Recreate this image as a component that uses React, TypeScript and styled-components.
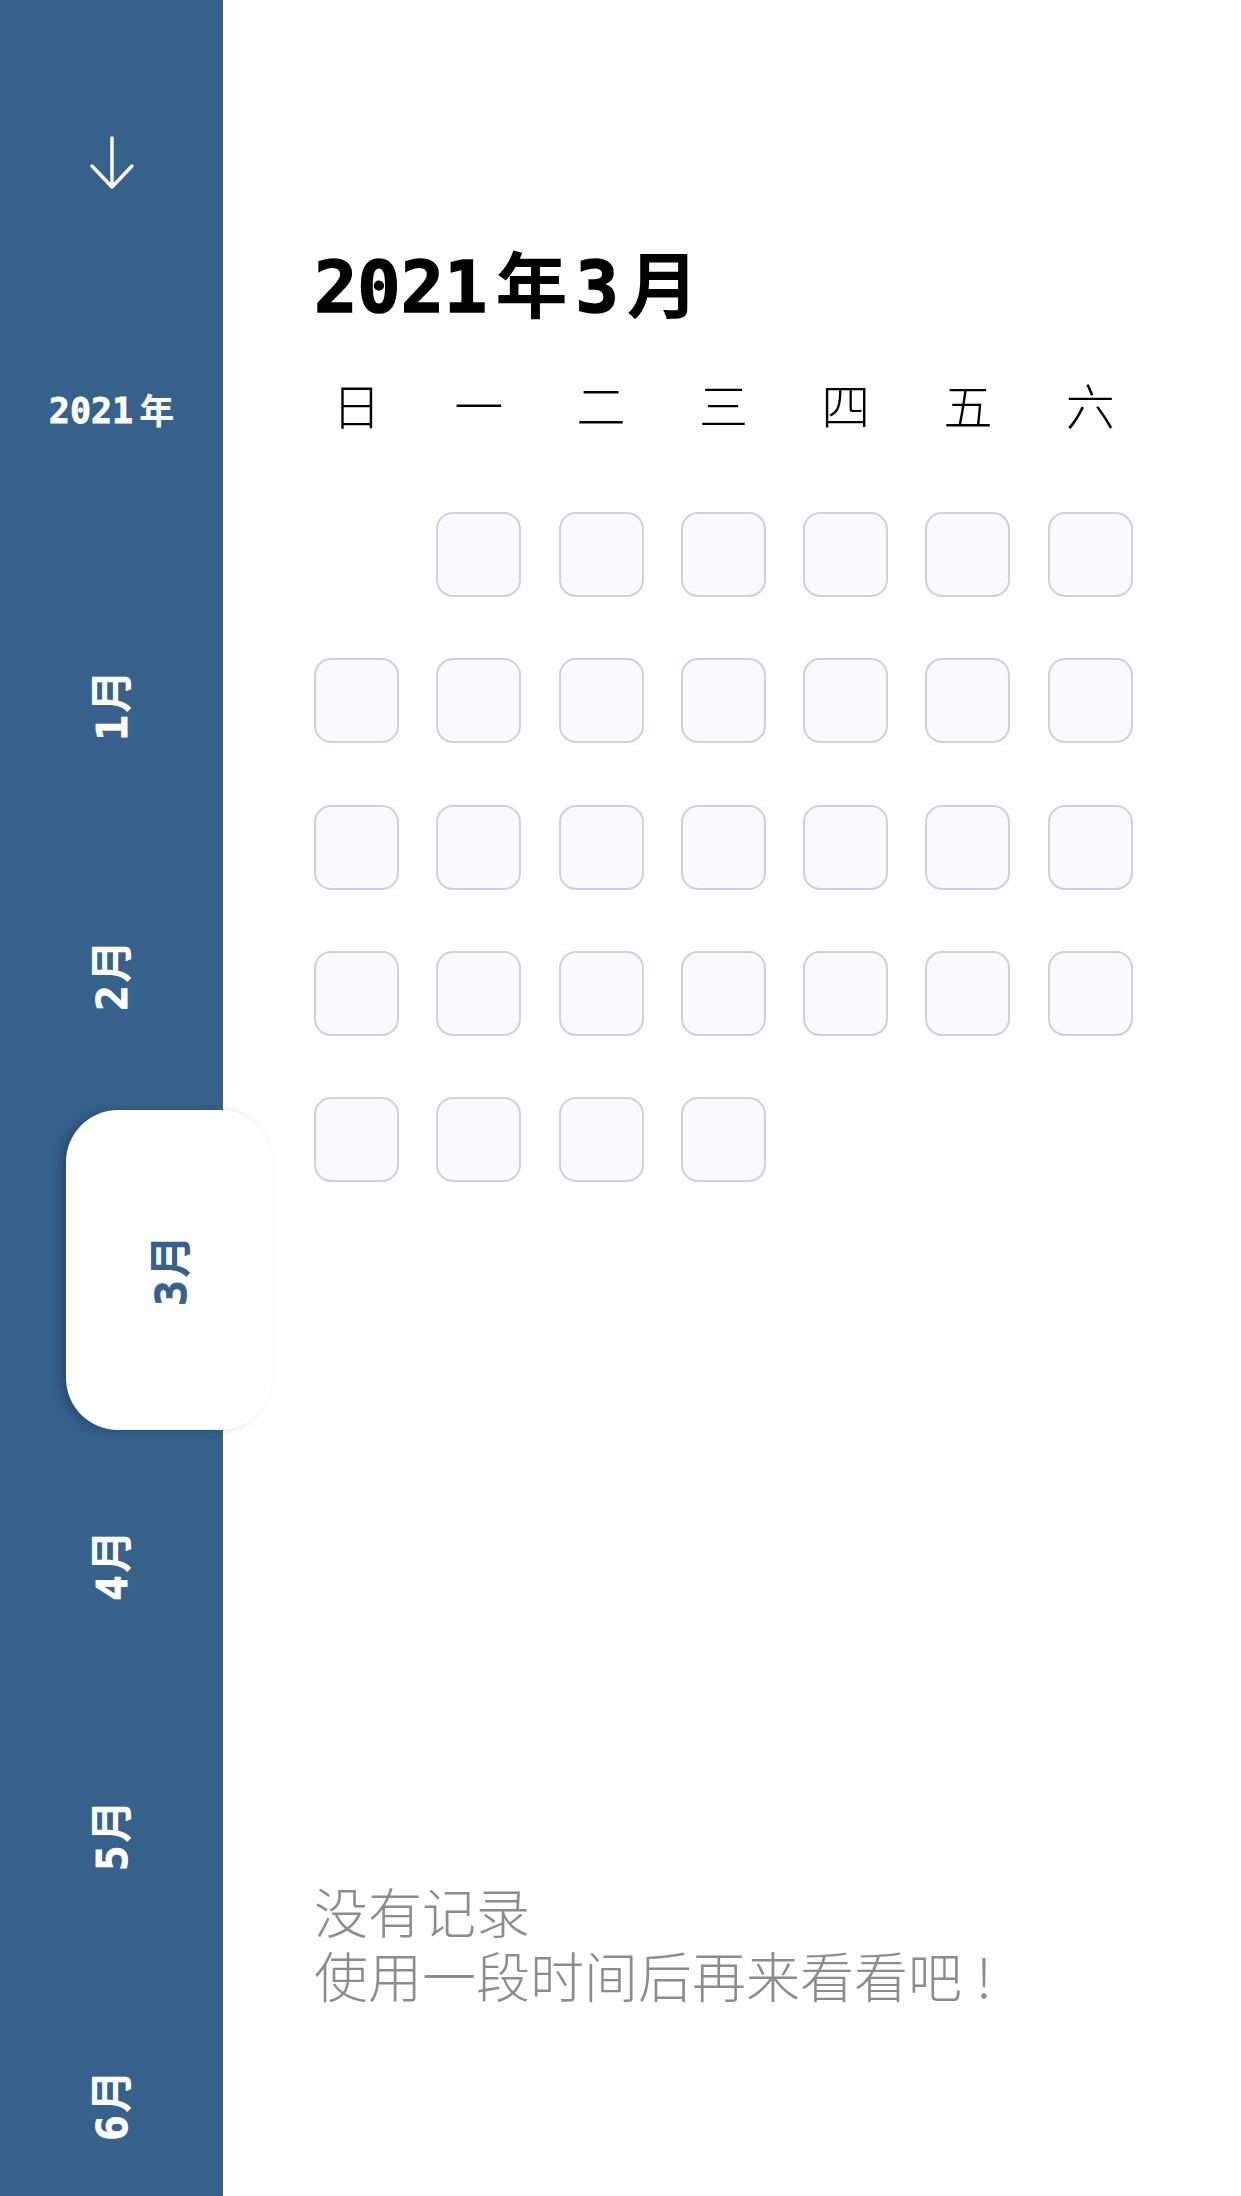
import React from "react";
import styled, { createGlobalStyle } from "styled-components";

const GlobalStyle = createGlobalStyle`
  html, body {
    margin: 0;
    padding: 0;
    background: #ffffff;
  }
  body {
    font-family: "Noto Sans CJK SC", "Noto Sans", sans-serif;
  }
  * { box-sizing: border-box; }
`;

const SIDEBAR = "#36618b";
const MONO = `"DejaVu Sans Mono", "Noto Sans CJK SC", monospace`;
const CJK = `"Noto Sans CJK SC", "Noto Sans", sans-serif`;

const Page = styled.div`
  display: flex;
  width: 1241px;
  height: 2196px;
  overflow: hidden;
`;

const Sidebar = styled.nav`
  flex: 0 0 223px;
  width: 223px;
  background: ${SIDEBAR};
  display: flex;
  flex-direction: column;
  position: relative;
  z-index: 2;
  & > * {
    flex-shrink: 0;
  }
`;

const ArrowBox = styled.div`
  height: 326px;
  display: flex;
  align-items: center;
  justify-content: center;
`;

const YearBox = styled.div`
  height: 170px;
  display: flex;
  align-items: center;
  justify-content: center;
  color: #ffffff;
  font-family: ${MONO};
  font-weight: 700;
  font-size: 35px;
  line-height: 1;
  -webkit-text-stroke: 0.8px #ffffff;
`;

const YearCjk = styled.span`
  display: inline-block;
  font-family: ${CJK};
  margin-left: 6px;
  -webkit-text-stroke: 0;
  transform: translateY(-3px);
`;

const MonthList = styled.div`
  display: flex;
  flex-direction: column;
  padding-top: 74px;
  & > * {
    flex-shrink: 0;
  }
`;

const MonthItem = styled.div<{ $active?: boolean }>`
  height: ${(p) => (p.$active ? "320px" : "270px")};
  display: flex;
  align-items: center;
  justify-content: center;
  ${(p) =>
    p.$active
      ? `
    width: 206px;
    margin-left: 66px;
    background: #ffffff;
    border-radius: 52px;
    box-shadow: -8px 1px 12px -3px rgba(10, 30, 60, 0.34), 0 -1px 6px rgba(0, 0, 0, 0.03);
  `
      : ""}
`;

const MonthLabel = styled.span<{ $active?: boolean }>`
  writing-mode: vertical-rl;
  text-orientation: sideways;
  transform: rotate(180deg);
  margin-left: ${(p) => (p.$active ? "0" : "-3px")};
  font-family: ${MONO};
  font-weight: 700;
  font-size: 43px;
  line-height: 1;
  color: ${(p) => (p.$active ? SIDEBAR : "#ffffff")};
  -webkit-text-stroke: 0.8px ${(p) => (p.$active ? SIDEBAR : "#ffffff")};
`;

const MonthCjk = styled.span`
  font-family: ${CJK};
  margin-top: 2px;
  -webkit-text-stroke: 0;
`;

const Main = styled.main`
  flex: 1;
  display: flex;
  flex-direction: column;
  padding: 231px 0 0 91px;
`;

const Title = styled.h1`
  margin: 0;
  height: 100px;
  line-height: 100px;
  font-family: ${MONO};
  font-weight: 700;
  font-size: 72px;
  color: #000000;
  white-space: nowrap;
  -webkit-text-stroke: 1.6px #000000;
`;

const TitleCjk = styled.span`
  font-family: ${CJK};
  font-weight: 700;
  margin: 0 8px;
  -webkit-text-stroke: 0;
`;

const Columns = styled.div`
  display: grid;
  grid-template-columns: repeat(7, 85px);
  column-gap: 37.3px;
`;

const WeekRow = styled(Columns)`
  margin-top: 23px;
  height: 100px;
  align-items: center;
`;

const WeekDay = styled.div`
  text-align: center;
  font-family: ${CJK};
  font-weight: 300;
  font-size: 49px;
  line-height: 100px;
  color: #000000;
  white-space: nowrap;
`;

const DayGrid = styled(Columns)`
  margin-top: 58px;
  grid-auto-rows: 85px;
  row-gap: 61.3px;
`;

const DayCell = styled.div<{ $col?: number }>`
  width: 85px;
  height: 85px;
  border: 2px solid #c9d4de;
  border-radius: 17px;
  background: #f8fafc;
  ${(p) => (p.$col ? `grid-column-start: ${p.$col};` : "")}
`;

const Empty = styled.div`
  margin-top: 697px;
  display: flex;
  flex-direction: column;
  font-family: ${CJK};
  font-weight: 300;
  font-size: 54px;
  color: #8c8c8c;
  white-space: nowrap;
`;

const EmptyLine = styled.p`
  margin: 0;
  height: 64px;
  line-height: 64px;
`;

const Bang = styled.span`
  margin-left: 14px;
`;

const ArrowDown = () => (
  <svg width="48" height="58" viewBox="0 0 48 58" fill="none">
    <path
      d="M24 4 V53 M4 32 L24 53 L44 32"
      stroke="#ffffff"
      strokeWidth="3.4"
      strokeLinecap="round"
      strokeLinejoin="round"
    />
  </svg>
);

const weekDays = ["日", "一", "二", "三", "四", "五", "六"];
const months = [1, 2, 3, 4, 5, 6];
const ACTIVE = 3;
const FIRST_WEEKDAY = 1; // 2021-03-01 is Monday
const DAYS = 31;

export default function App() {
  return (
    <>
      <GlobalStyle />
      <Page>
        <Sidebar>
          <ArrowBox>
            <ArrowDown />
          </ArrowBox>
          <YearBox>
            2021<YearCjk>年</YearCjk>
          </YearBox>
          <MonthList>
            {months.map((m) => (
              <MonthItem key={m} $active={m === ACTIVE}>
                <MonthLabel $active={m === ACTIVE}>
                  {m}
                  <MonthCjk>月</MonthCjk>
                </MonthLabel>
              </MonthItem>
            ))}
          </MonthList>
        </Sidebar>
        <Main>
          <Title>
            2021<TitleCjk>年</TitleCjk>3<TitleCjk>月</TitleCjk>
          </Title>
          <WeekRow>
            {weekDays.map((d) => (
              <WeekDay key={d}>{d}</WeekDay>
            ))}
          </WeekRow>
          <DayGrid>
            {Array.from({ length: DAYS }, (_, i) => (
              <DayCell key={i} $col={i === 0 ? FIRST_WEEKDAY + 1 : undefined} />
            ))}
          </DayGrid>
          <Empty>
            <EmptyLine>没有记录</EmptyLine>
            <EmptyLine>
              使用一段时间后再来看看吧<Bang>!</Bang>
            </EmptyLine>
          </Empty>
        </Main>
      </Page>
    </>
  );
}
